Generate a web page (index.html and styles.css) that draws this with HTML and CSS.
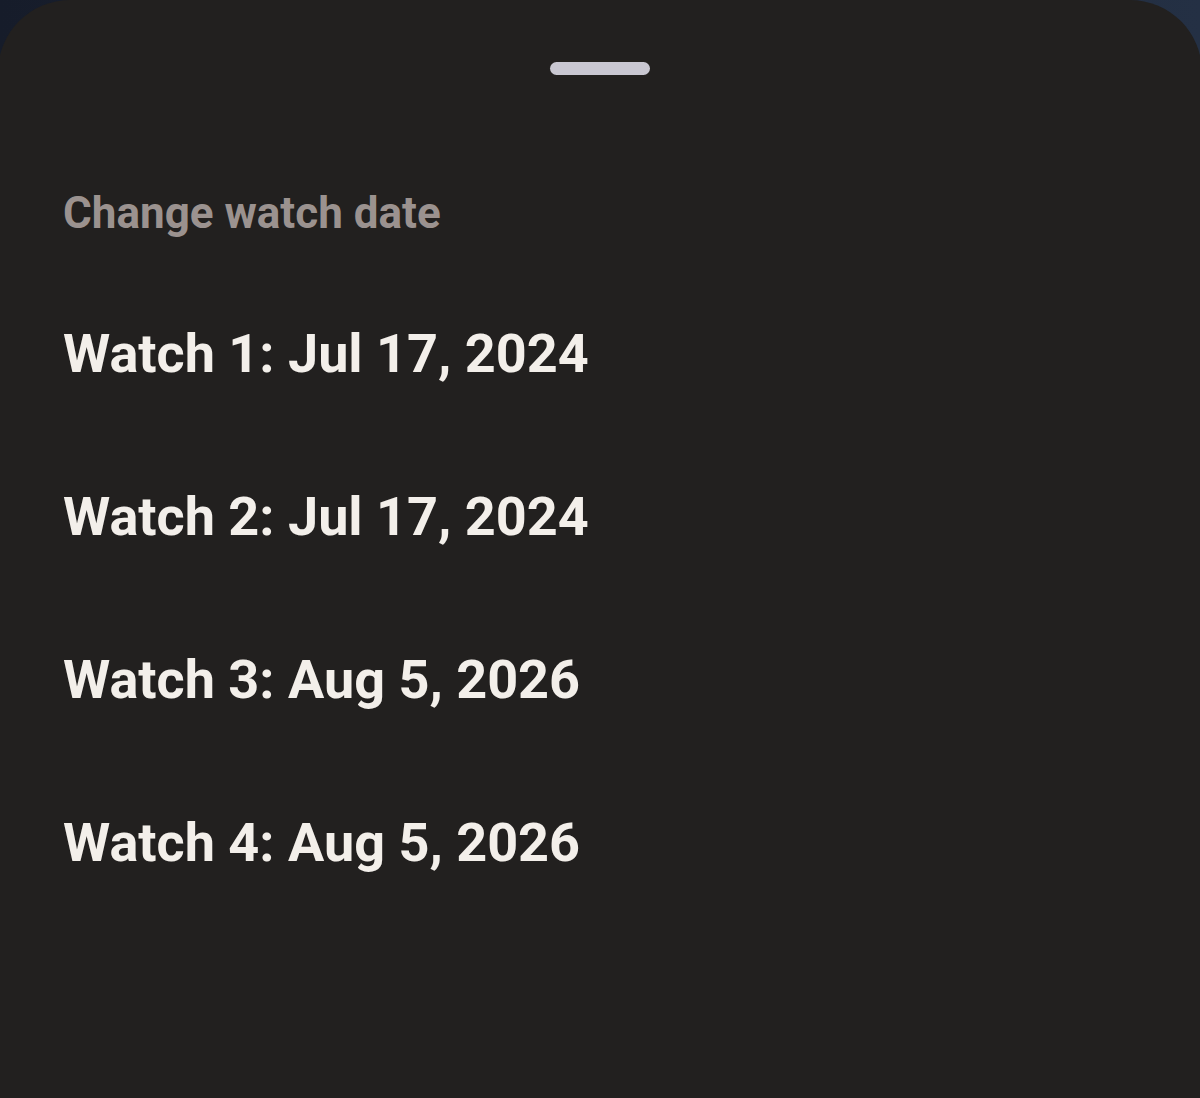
FILE: index.html
```html
<!DOCTYPE html>
<html>
<head>
  <title>Change watch date</title>
  <meta charset="UTF-8">
  <link rel="stylesheet" href="styles.css">
</head>
<body>
  <div class="sheet">
    <div class="drag-handle"></div>
    <h2 class="sheet-title">Change watch date</h2>
    <ul class="watch-list">
      <li class="watch-item">Watch 1: Jul 17, 2024</li>
      <li class="watch-item">Watch 2: Jul 17, 2024</li>
      <li class="watch-item">Watch 3: Aug 5, 2026</li>
      <li class="watch-item">Watch 4: Aug 5, 2026</li>
    </ul>
  </div>
</body>
</html>
```

FILE: styles.css
```css
:root {
  --sheet-bg: #22201f;
  --handle: #c9c7d1;
  --muted-text: #9b928f;
  --text-color: #f3efea;
}

* {
  box-sizing: border-box;
  margin: 0;
  padding: 0;
}

html, body {
  height: 100%;
}

body {
  font-family: Roboto, 'Noto Sans', sans-serif;
  background: linear-gradient(90deg, #161c2a, #243044);
  overflow: hidden;
}

.sheet {
  min-height: 100%;
  margin: 0 -2px;
  background-color: var(--sheet-bg);
  border-radius: 72px 72px 0 0;
  padding: 62px 65px 0;
}

.drag-handle {
  width: 100px;
  height: 13px;
  margin: 0 auto;
  border-radius: 7px;
  background-color: var(--handle);
}

.sheet-title {
  margin-top: 98px;
  font-size: 44px;
  font-weight: 700;
  line-height: 80px;
  letter-spacing: 0;
  color: var(--muted-text);
}

.watch-list {
  list-style: none;
  margin-top: 19px;
}

.watch-item {
  font-size: 54px;
  font-weight: 700;
  line-height: 163px;
  color: var(--text-color);
}
```
